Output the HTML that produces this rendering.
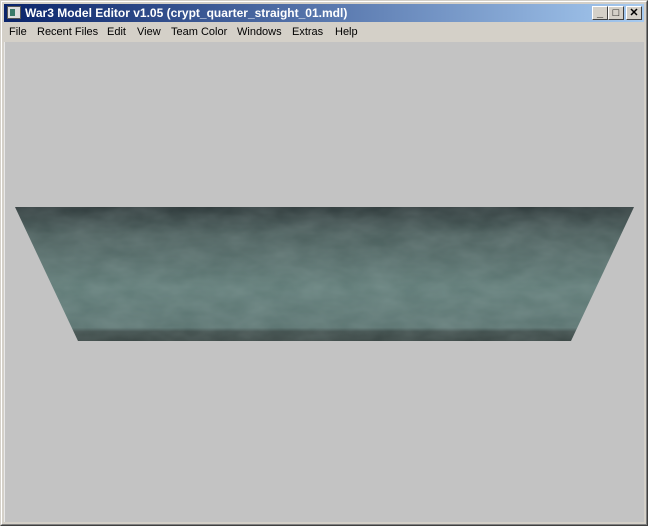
<!DOCTYPE html>
<html><head><style>
*{margin:0;padding:0;box-sizing:border-box}
body{width:648px;height:526px;background:#d4d0c8;position:relative;overflow:hidden;font-family:"Liberation Sans",sans-serif}
.win{position:absolute;left:0;top:0;width:648px;height:526px;border:1px solid #d4d0c8;border-right-color:#404040;border-bottom-color:#404040;}
.win2{position:absolute;left:1px;top:1px;right:1px;bottom:1px;border:1px solid #fff;border-right-color:#808080;border-bottom-color:#808080;}
.title{position:absolute;left:4px;top:4px;width:640px;height:18px;background:linear-gradient(90deg,#0a246a,#a6caf0);color:#fff;font-weight:bold;font-size:12px;line-height:18px;padding-left:21px;letter-spacing:0px}
.ico{position:absolute;left:3px;top:2px;width:14px;height:13px;background:#ddd;border:1px solid #555}
.ico:after{content:"";position:absolute;left:2px;top:2px;width:5px;height:7px;background:#3a7a6a}
.btn{position:absolute;top:2px;width:16px;height:14px;background:#d4d0c8;border:1px solid #fff;border-right-color:#404040;border-bottom-color:#404040;color:#000;font-size:11px;line-height:12px;text-align:center}
.menu{position:absolute;left:4px;top:23px;height:18px;font-size:11px;line-height:18px;color:#000;white-space:nowrap}
.menu span{position:absolute;top:0}
.view{position:absolute;left:4px;top:42px;width:640px;height:480px;background:#c3c3c3;border-left:1px solid #e8e8e8}
</style></head><body>
<div class="win"></div><div class="win2"></div>
<div class="title"><div class="ico"></div>War3 Model Editor v1.05 (crypt_quarter_straight_01.mdl)
<div class="btn" style="left:588px">_</div><div class="btn" style="left:604px">□</div><div class="btn" style="left:622px;font-weight:bold">✕</div></div>
<div class="menu"><span style="left:5px">File</span><span style="left:33px">Recent Files</span><span style="left:103px">Edit</span><span style="left:133px">View</span><span style="left:167px">Team Color</span><span style="left:233px">Windows</span><span style="left:288px">Extras</span><span style="left:331px">Help</span></div>
<div class="view"></div>
<svg style="position:absolute;left:0;top:0" width="648" height="526">
<defs>
<linearGradient id="g" x1="0" y1="0" x2="0" y2="1">
<stop offset="0" stop-color="#2b3637"/><stop offset="0.2" stop-color="#4a5d5b"/><stop offset="0.6" stop-color="#5f7a76"/><stop offset="0.9" stop-color="#5a7370"/><stop offset="0.93" stop-color="#3d4b49"/><stop offset="1" stop-color="#34403e"/></linearGradient>
<filter id="n"><feTurbulence type="fractalNoise" baseFrequency="0.03 0.06" numOctaves="3" seed="3"/><feColorMatrix values="0 0 0 0 0.6 0 0 0 0 0.7 0 0 0 0 0.7 0 0 0 0.2 0"/><feComposite in2="SourceGraphic" operator="in"/></filter>
</defs>
<polygon points="15,207 634,207 571,341 78,341" fill="url(#g)"/>
<polygon points="15,207 634,207 571,341 78,341" fill="#000" filter="url(#n)"/>
</svg>
</body></html>
